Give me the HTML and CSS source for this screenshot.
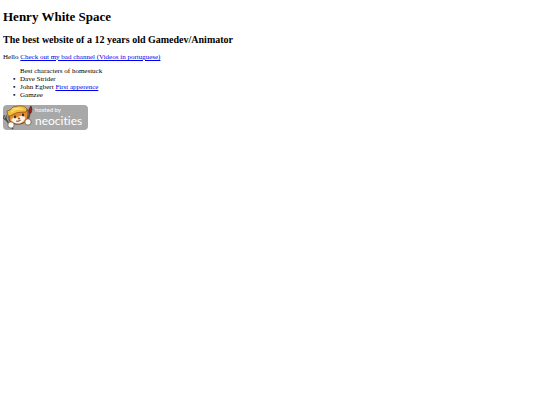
FILE: index.html
```html
<!DOCTYPE html>
<html lang="en">
<head>
<meta charset="utf-8">
<title>Henry White Space</title>
<link rel="stylesheet" href="styles.css">
</head>
<body>
<h1>Henry White Space</h1>
<h2>The best website of a 12 years old Gamedev/Animator</h2>
<p>Hello <a href="#channel">Check out my bad channel (Videos in portuguese)</a></p>
<ul>
  <li class="caption">Best characters of homestuck</li>
  <li>Dave Strider</li>
  <li>John Egbert <a href="#first">First apperence</a></li>
  <li>Gamzee</li>
</ul>
<a class="badge" href="#neocities" aria-label="Hosted by Neocities">
  <svg class="cat" viewBox="0 0 31 25" aria-hidden="true">
    <path d="M2 13 L10 24" stroke="#4b4944" stroke-width="1.6"/>
    <path d="M0 11 Q0 15 3 15 Q5 13 3 10 M1 10 l2 4" fill="none" stroke="#4b4944" stroke-width=".9"/>
    <path d="M6 9 L20 4 25 5 25 11 Q24 18 17 19 Q9 20 6 15Z" fill="#e58a35" stroke="#59331f" stroke-width=".9"/>
    <path d="M8 15 Q11 11 14 13 Q18 9 22 12 Q23 15 18 18 Q12 20 8 15Z" fill="#fff4df"/>
    <path d="M5 11 L4 6 7 5 Q9 1 15 1 Q21 0 24 4 L23 7 Q14 6 7 11Z" fill="#f0be3a" stroke="#8d5a1c" stroke-width=".8"/>
    <path d="M8 7 Q13 3 20 4 M9 4 L17 3" fill="none" stroke="#ffe98b" stroke-width=".9"/>
    <ellipse cx="12" cy="12" rx="1" ry="1.4" fill="#302820"/>
    <ellipse cx="20" cy="10" rx="1" ry="1.4" fill="#302820"/>
    <path d="M15 13 h2 l-1 1.5z M13 16 q2 1.5 5-1" fill="#a44b32" stroke="#704130" stroke-width=".6"/>
    <path d="M24 18 L27 8" stroke="#6b4632" stroke-width="1.7"/>
    <path d="M26 8 Q25 4 28 1 Q30 4 28 8Z" fill="#97201f" stroke="#502622" stroke-width=".7"/>
    <circle cx="8" cy="20" r="3.2" fill="#fffaf0" stroke="#625b51" stroke-width=".8"/>
    <circle cx="25" cy="17" r="3.2" fill="#fffaf0" stroke="#625b51" stroke-width=".8"/>
  </svg>
  <span class="brand"><small>hosted by</small><span>neocities</span></span>
</a>
</body>
</html>
```
FILE: styles.css
```css
body {
  margin: 9px 3px 3px;
  background: #fff;
  color: #000;
  font: 7px/8px "Liberation Serif", serif;
}

h1 {
  margin: 0 0 8px;
  font-size: 13px;
  line-height: 16px;
}

h2 {
  margin: 0 0 7px;
  font-size: 10px;
  line-height: 13px;
}

p {
  margin: 0 0 6px;
}

ul {
  margin: 0 0 6px;
  padding-left: 17px;
  list-style: none;
}

li::before {
  content: "•";
  display: inline-block;
  width: 7px;
  margin-left: -7px;
  font-weight: bold;
}

li.caption::before {
  content: none;
}

a {
  color: #0000ee;
}

.badge {
  display: inline-flex;
  align-items: center;
  gap: 1px;
  padding-right: 6px;
  border-radius: 4px;
  background: #a8a8a8;
  color: #fff;
  font-family: Lato, "Open Sans", sans-serif;
  font-variant-ligatures: none;
  text-decoration: none;
}

.cat {
  width: 31px;
  height: 25px;
}

.brand {
  display: flex;
  flex-direction: column;
  padding-bottom: 2px;
  font-size: 12px;
  line-height: 14px;
}

.brand small {
  font-size: 6px;
  line-height: 8px;
}
```
